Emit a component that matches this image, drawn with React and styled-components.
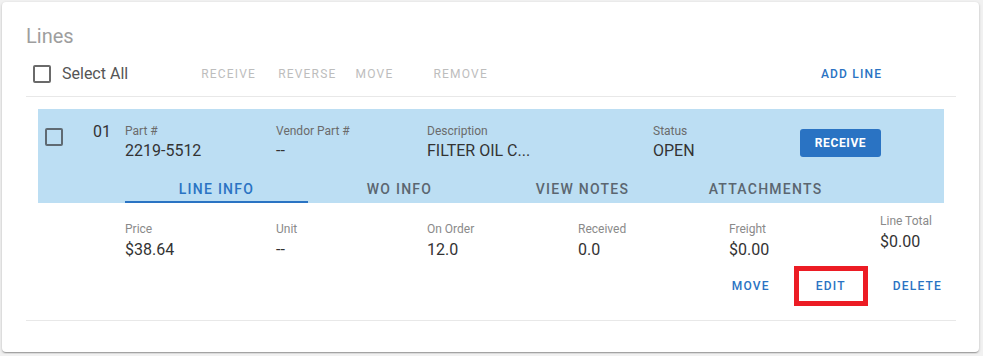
import React from "react";
import styled, { createGlobalStyle } from "styled-components";

const GlobalStyle = createGlobalStyle`
  html, body { margin: 0; padding: 0; background: #f1f1f1; }
  body { font-family: Roboto, "Noto Sans", Arial, sans-serif; }
  * { box-sizing: border-box; }
`;

const Page = styled.div`
  padding: 2px 4px 2px 2px;
`;

const Card = styled.section`
  background: #fff;
  border-radius: 4px;
  box-shadow: 0 1px 3px rgba(0,0,0,0.2), 0 1px 1px rgba(0,0,0,0.14), 0 2px 1px -1px rgba(0,0,0,0.12);
  padding: 22px 23px 31px 24px;
`;

const Title = styled.h2`
  margin: 0;
  font-size: 20px;
  line-height: 24px;
  font-weight: 400;
  color: #9e9e9e;
`;

const Toolbar = styled.div`
  display: flex;
  align-items: center;
  height: 33px;
  margin-top: 9px;
  padding-left: 7px;
`;

const Check = styled.span`
  display: inline-block;
  width: 18px;
  height: 18px;
  border: 2px solid ${p => p.$color || "#6a6a6a"};
  border-radius: 2px;
  flex: none;
`;

const CheckLabel = styled.label`
  display: flex;
  align-items: center;
  gap: 11px;
  font-size: 16px;
  color: #555;
`;

const TextButton = styled.button`
  background: none;
  border: 0;
  padding: 0;
  margin: 0 0 0 ${p => p.$ml || 0}px;
  font-family: inherit;
  font-size: 12px;
  font-weight: ${p => (p.$disabled ? 400 : 500)};
  letter-spacing: 1.2px;
  text-transform: uppercase;
  color: ${p => (p.$disabled ? "#bdbdbd" : "#2a73c3")};
  cursor: pointer;
`;

const Divider = styled.hr`
  border: 0;
  border-top: 1px solid #e8e8e8;
  margin: ${p => p.$m || "0"};
`;

const LineRow = styled.div`
  margin: 12px 12px 0;
  background: #bcdef3;
  padding-top: 14px;
`;

const RowHead = styled.div`
  display: flex;
  align-items: flex-start;
`;

const RowCheck = styled.div`
  width: 55px;
  padding: 5px 0 0 7px;
`;

const LineNo = styled.div`
  width: 32px;
  font-size: 16px;
  line-height: 20px;
  margin-top: -1px;
  color: #333;
`;

const HeadGrid = styled.div`
  display: grid;
  grid-template-columns: 151px 151px 226px 147px auto;
  align-items: start;
`;

const Field = styled.div`
  display: flex;
  flex-direction: column;
  margin-top: ${p => (p.$raise ? -8 : 0)}px;
`;

const Label = styled.span`
  font-size: 12px;
  line-height: 16px;
  color: ${p => (p.$light ? "#8a8a8a" : "#6b6b6b")};
`;

const Value = styled.span`
  font-size: 16px;
  line-height: 20px;
  margin-top: ${p => p.$gap || 2}px;
  color: #333;
  white-space: nowrap;
`;

const PrimaryButton = styled.button`
  width: 81px;
  height: 28px;
  margin-top: 6px;
  border: 0;
  border-radius: 3px;
  background: #2a73c3;
  color: #fff;
  font-family: inherit;
  font-size: 12px;
  font-weight: 700;
  letter-spacing: 0.6px;
  cursor: pointer;
`;

const Tabs = styled.div`
  display: flex;
  margin: 14px 0 0 87px;
`;

const Tab = styled.div`
  width: 183px;
  height: 28px;
  display: flex;
  align-items: center;
  justify-content: center;
  font-size: 14px;
  font-weight: 500;
  letter-spacing: 1.25px;
  color: ${p => (p.$active ? "#2a73c3" : "#5b6670")};
  border-bottom: 2px solid ${p => (p.$active ? "#2a73c3" : "transparent")};
  padding-top: 2px;
`;

const Details = styled.div`
  margin: 18px 0 0 99px;
  display: grid;
  grid-template-columns: repeat(5, 151px) auto;
  align-items: start;
`;

const Actions = styled.div`
  display: flex;
  justify-content: flex-end;
  margin-top: 11px;
  padding-right: 6px;
`;

const ActionButton = styled.button`
  min-width: 64px;
  height: 30px;
  padding: 0 8px;
  margin-left: ${p => p.$ml || 0}px;
  background: none;
  border: 0;
  font-family: inherit;
  font-size: 12px;
  font-weight: 500;
  letter-spacing: 1.2px;
  color: #2a73c3;
  outline: ${p => (p.$highlight ? "5px solid #ec1c24" : "none")};
  cursor: pointer;
`;

export default function App() {
  return (
    <>
      <GlobalStyle />
      <Page>
        <Card>
          <Title>Lines</Title>
          <Toolbar>
            <CheckLabel>
              <Check />
              Select All
            </CheckLabel>
            <TextButton $disabled $ml={73}>Receive</TextButton>
            <TextButton $disabled $ml={22}>Reverse</TextButton>
            <TextButton $disabled $ml={19}>Move</TextButton>
            <TextButton $disabled $ml={40}>Remove</TextButton>
            <TextButton $ml={333}>Add Line</TextButton>
          </Toolbar>
          <Divider $m="6px 0 0" />
          <LineRow>
            <RowHead>
              <RowCheck>
                <Check $color="#5f6a72" />
              </RowCheck>
              <LineNo>01</LineNo>
              <HeadGrid>
                <Field>
                  <Label>Part #</Label>
                  <Value>2219-5512</Value>
                </Field>
                <Field>
                  <Label>Vendor Part #</Label>
                  <Value>--</Value>
                </Field>
                <Field>
                  <Label>Description</Label>
                  <Value>FILTER OIL C...</Value>
                </Field>
                <Field>
                  <Label>Status</Label>
                  <Value>OPEN</Value>
                </Field>
                <PrimaryButton>RECEIVE</PrimaryButton>
              </HeadGrid>
            </RowHead>
            <Tabs>
              <Tab $active>LINE INFO</Tab>
              <Tab>WO INFO</Tab>
              <Tab>VIEW NOTES</Tab>
              <Tab>ATTACHMENTS</Tab>
            </Tabs>
          </LineRow>
          <Details>
            <Field>
              <Label $light>Price</Label>
              <Value $gap={3}>$38.64</Value>
            </Field>
            <Field>
              <Label $light>Unit</Label>
              <Value $gap={3}>--</Value>
            </Field>
            <Field>
              <Label $light>On Order</Label>
              <Value $gap={3}>12.0</Value>
            </Field>
            <Field>
              <Label $light>Received</Label>
              <Value $gap={3}>0.0</Value>
            </Field>
            <Field>
              <Label $light>Freight</Label>
              <Value $gap={3}>$0.00</Value>
            </Field>
            <Field $raise>
              <Label $light>Line Total</Label>
              <Value $gap={3}>$0.00</Value>
            </Field>
          </Details>
          <Actions>
            <ActionButton>MOVE</ActionButton>
            <ActionButton $ml={16} $highlight>EDIT</ActionButton>
            <ActionButton $ml={22}>DELETE</ActionButton>
          </Actions>
          <Divider $m="19px 0 0" />
        </Card>
      </Page>
    </>
  );
}
